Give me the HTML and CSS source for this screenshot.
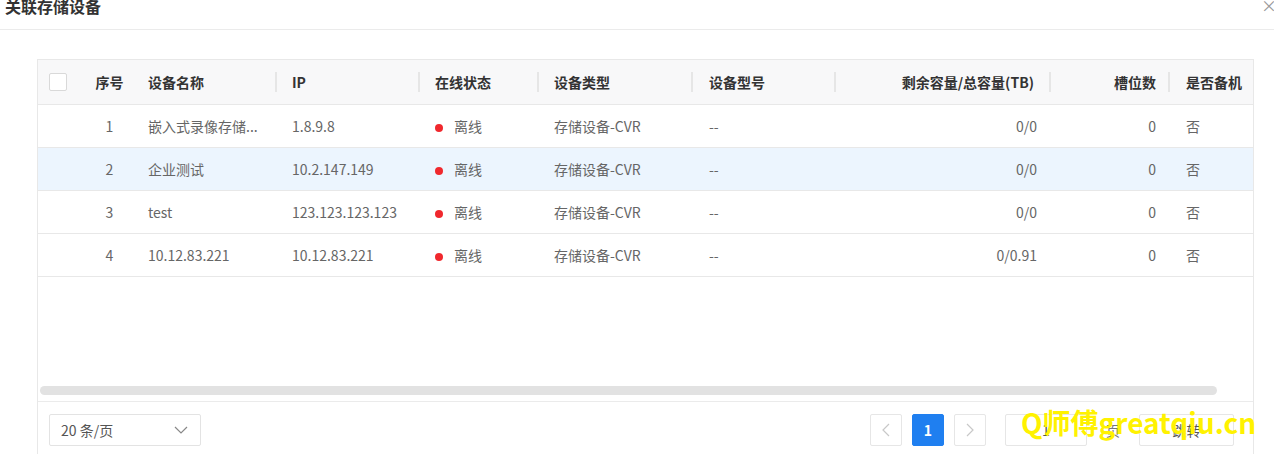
FILE: index.html
```html
<!DOCTYPE html>
<html lang="zh-CN">
<head>
  <meta charset="UTF-8" />
  <title>关联存储设备</title>
  <link rel="stylesheet" href="styles.css">
</head>
<body>
  <div class="dialog">
    <div class="dialog-header">
      <span class="dialog-title">关联存储设备</span>
      <span class="dialog-close">×</span>
    </div>

    <div class="dialog-body">
      <div class="table-wrap">
        <div class="table-scroll">
          <table class="grid">
            <colgroup>
              <col class="w-check" />
              <col class="w-no" />
              <col class="w-name" />
              <col class="w-ip" />
              <col class="w-status" />
              <col class="w-type" />
              <col class="w-model" />
              <col class="w-cap" />
              <col class="w-slot" />
              <col class="w-backup" />
            </colgroup>
            <thead>
              <tr>
                <th class="c-check"><span class="checkbox"></span></th>
                <th class="c-no">序号</th>
                <th class="c-name sep">设备名称</th>
                <th class="c-ip sep">IP</th>
                <th class="c-status sep">在线状态</th>
                <th class="c-type sep">设备类型</th>
                <th class="c-model sep">设备型号</th>
                <th class="c-cap sep">剩余容量/总容量(TB)</th>
                <th class="c-slot sep">槽位数</th>
                <th class="c-backup">是否备机</th>
              </tr>
            </thead>
            <tbody>
              <tr>
                <td class="c-check"></td>
                <td class="c-no">1</td>
                <td class="c-name">嵌入式录像存储...</td>
                <td class="c-ip">1.8.9.8</td>
                <td class="c-status"><span class="dot"></span>离线</td>
                <td class="c-type">存储设备-CVR</td>
                <td class="c-model">--</td>
                <td class="c-cap">0/0</td>
                <td class="c-slot">0</td>
                <td class="c-backup">否</td>
              </tr>
              <tr class="hover">
                <td class="c-check"></td>
                <td class="c-no">2</td>
                <td class="c-name">企业测试</td>
                <td class="c-ip">10.2.147.149</td>
                <td class="c-status"><span class="dot"></span>离线</td>
                <td class="c-type">存储设备-CVR</td>
                <td class="c-model">--</td>
                <td class="c-cap">0/0</td>
                <td class="c-slot">0</td>
                <td class="c-backup">否</td>
              </tr>
              <tr>
                <td class="c-check"></td>
                <td class="c-no">3</td>
                <td class="c-name">test</td>
                <td class="c-ip">123.123.123.123</td>
                <td class="c-status"><span class="dot"></span>离线</td>
                <td class="c-type">存储设备-CVR</td>
                <td class="c-model">--</td>
                <td class="c-cap">0/0</td>
                <td class="c-slot">0</td>
                <td class="c-backup">否</td>
              </tr>
              <tr>
                <td class="c-check"></td>
                <td class="c-no">4</td>
                <td class="c-name">10.12.83.221</td>
                <td class="c-ip">10.12.83.221</td>
                <td class="c-status"><span class="dot"></span>离线</td>
                <td class="c-type">存储设备-CVR</td>
                <td class="c-model">--</td>
                <td class="c-cap">0/0.91</td>
                <td class="c-slot">0</td>
                <td class="c-backup">否</td>
              </tr>
            </tbody>
          </table>
          <div class="scrollbar"></div>
        </div>

        <div class="table-footer">
          <div class="page-size">
            <span>20 条/页</span>
            <svg class="chevron" width="14" height="8" viewBox="0 0 14 8">
              <path d="M1 1 L7 7 L13 1" fill="none" stroke="#888" stroke-width="1.2" />
            </svg>
          </div>

          <div class="pager">
            <span class="page-btn">
              <svg width="8" height="14" viewBox="0 0 8 14"><path d="M7 1 L1 7 L7 13" fill="none" stroke="#c8c8c8" stroke-width="1.2" /></svg>
            </span>
            <span class="page-btn active">1</span>
            <span class="page-btn">
              <svg width="8" height="14" viewBox="0 0 8 14"><path d="M1 1 L7 7 L1 13" fill="none" stroke="#c8c8c8" stroke-width="1.2" /></svg>
            </span>
            <span class="jump-input">1</span>
            <span class="jump-unit">页</span>
            <span class="jump-btn">跳转</span>
          </div>
        </div>
      </div>
    </div>
  </div>

  <div class="watermark">Q师傅greatqiu.cn</div>
</body>
</html>
```

FILE: styles.css
```css
body {
  margin: 0;
  font-family: "Noto Sans CJK SC", "Noto Sans", sans-serif;
  font-size: 14px;
  color: #666;
  background-color: #ffffff;
  overflow: hidden;
}

.dialog-header {
  height: 29px;
  border-bottom: 1px solid #ebebeb;
  display: flex;
  justify-content: space-between;
  padding: 0 0 0 5px;
}

.dialog-title {
  margin-top: -3px;
  line-height: 18px;
  font-size: 16px;
  font-weight: bold;
  color: #333;
}

.dialog-close {
  margin-top: -4px;
  margin-right: -3px;
  line-height: 18px;
  font-size: 16px;
  color: #999;
}

.dialog-body {
  padding: 29px 0 0 37px;
  width: 1217px;
}

.table-wrap {
  border: 1px solid #e8e8e8;
  border-bottom: none;
  height: 400px;
  display: flex;
  flex-direction: column;
}

.table-scroll {
  height: 341px;
  display: flex;
  flex-direction: column;
  border-bottom: 1px solid #ebebeb;
  overflow: hidden;
}

.grid {
  width: 1240px;
  min-width: 1240px;
  border-collapse: collapse;
  table-layout: fixed;
  flex-shrink: 0;
}

.w-check { width: 48px; }
.w-no { width: 47px; }
.w-name { width: 144px; }
.w-ip { width: 143px; }
.w-status { width: 119px; }
.w-type { width: 154px; }
.w-model { width: 143px; }
.w-cap { width: 215px; }
.w-slot { width: 119px; }
.w-backup { width: 108px; }

.grid th {
  height: 44px;
  padding: 0;
  background-color: #f8f8f9;
  color: #333;
  font-weight: bold;
  text-align: left;
  white-space: nowrap;
  overflow: hidden;
  border-bottom: 1px solid #e8e8e8;
  position: relative;
}

.grid th.sep::after {
  content: "";
  position: absolute;
  right: 0;
  top: 12px;
  width: 2px;
  height: 20px;
  background-color: #e6e6e6;
}

.grid td {
  height: 42px;
  padding: 0;
  white-space: nowrap;
  overflow: hidden;
  border-bottom: 1px solid #e8e8e8;
}

.grid tr.hover td {
  background-color: #ecf5fe;
}

.grid .c-no { text-align: center; }
.grid .c-name,
.grid .c-ip,
.grid .c-status,
.grid .c-type { padding-left: 15px; }
.grid .c-model,
.grid .c-backup { padding-left: 16px; }
.grid .c-cap { text-align: right; padding-right: 14px; }
.grid th.c-cap { padding-right: 17px; }
.grid .c-slot { text-align: right; padding-right: 14px; }

.checkbox {
  display: block;
  width: 16px;
  height: 16px;
  margin-left: 11px;
  border: 1px solid #d9d9d9;
  border-radius: 2px;
  background-color: #fff;
}

.dot {
  display: inline-block;
  width: 8px;
  height: 8px;
  border-radius: 50%;
  background-color: #f0282d;
  margin: 0 11px 1px 0;
  vertical-align: middle;
}

.scrollbar {
  margin: auto 36px 6px 2px;
  height: 9px;
  border-radius: 5px;
  background-color: #e2e2e2;
}

.table-footer {
  display: flex;
  justify-content: space-between;
  align-items: flex-start;
  padding: 12px 19px 0 11px;
}

.page-size {
  width: 152px;
  height: 32px;
  box-sizing: border-box;
  border: 1px solid #e3e3e3;
  border-radius: 2px;
  display: flex;
  align-items: center;
  justify-content: space-between;
  padding: 0 12px 0 11px;
  color: #555;
}

.pager {
  display: flex;
  align-items: center;
}

.page-btn {
  width: 32px;
  height: 32px;
  box-sizing: border-box;
  border: 1px solid #e6e6e6;
  border-radius: 2px;
  display: flex;
  align-items: center;
  justify-content: center;
  margin-right: 10px;
}

.page-btn.active {
  background-color: #1f7ff0;
  border-color: #1f7ff0;
  color: #fff;
  font-weight: bold;
}

.jump-input {
  width: 82px;
  height: 32px;
  box-sizing: border-box;
  border: 1px solid #e6e6e6;
  border-radius: 2px;
  margin-left: 9px;
  text-align: center;
  line-height: 30px;
  color: #555;
}

.jump-unit {
  margin: 0 19px 0 19px;
  color: #777;
}

.jump-btn {
  width: 95px;
  height: 32px;
  box-sizing: border-box;
  border: 1px solid #e6e6e6;
  border-radius: 2px;
  text-align: center;
  line-height: 30px;
  color: #555;
}

.watermark {
  position: absolute;
  left: 1021px;
  top: 402px;
  font-family: "Noto Sans CJK SC", "Noto Sans", sans-serif;
  font-size: 28px;
  font-weight: bold;
  color: #fff200;
  white-space: nowrap;
}
```
